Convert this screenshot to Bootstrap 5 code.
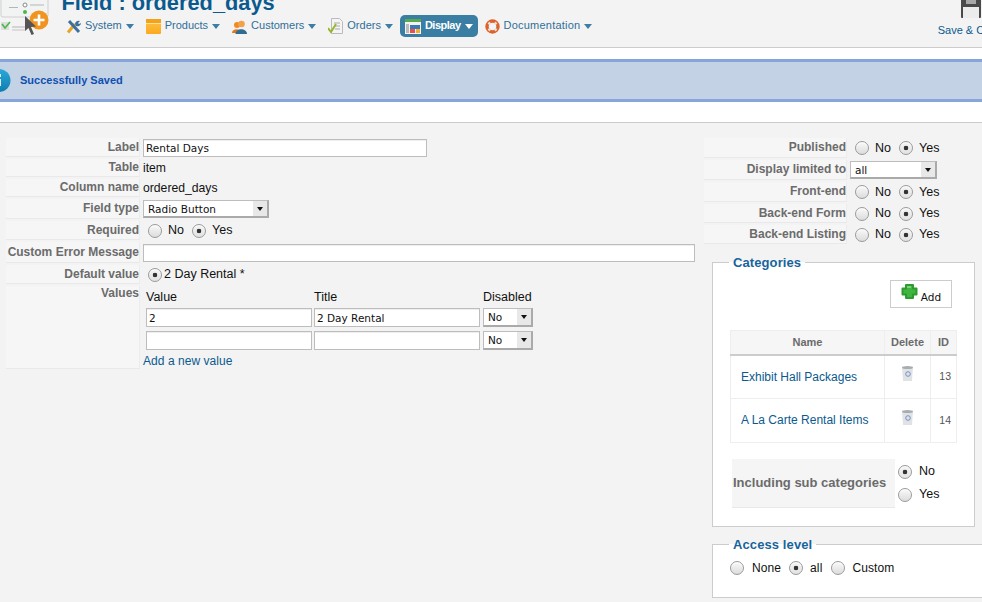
<!DOCTYPE html>
<html lang="en"><head><meta charset="utf-8"><title>Field : ordered_days</title>
<link rel="stylesheet" href="https://cdn.jsdelivr.net/npm/bootstrap@5.3.0/dist/css/bootstrap.min.css">
<style>
html,body{height:602px;overflow:hidden}
body{background:#f3f3f3;font:12px/1.2 "Liberation Sans",Arial,sans-serif;color:#111}
a{text-decoration:none;color:#0b5a8e}
.topbar{height:48px;border-bottom:1px solid #ccc;overflow:hidden}
.logo-slot{width:62px;flex:none}
.page-title{font:bold 21.8px/20px "Liberation Sans",sans-serif;color:#0b5a8e;margin:-7px 0 0 -.5px}
.menu{margin:2px 0 0 0;height:22px}
.menu-item{display:flex;align-items:center;height:22px;padding:0 5px;font-size:11px;color:#2f6f98;border-radius:5px;margin-right:2px;letter-spacing:0}
.menu-item svg{flex:none;margin-right:4px}
.menu-item.sys{margin-left:-1px}
.menu-item.on{background:#3a7ea3;color:#fff;font-weight:bold;letter-spacing:-.5px}
.menu-item.docs{letter-spacing:.22px}
.caret-mini{width:0;height:0;border:4px solid transparent;border-top:5px solid #3d7ea6;border-bottom:0;margin-left:4px}
.on .caret-mini{border-top-color:#fff}
.save-box{margin-right:-22px;width:66px;font-size:11px;color:#0b5a8e;white-space:nowrap}
.save-box svg{display:block;margin-top:-4px;margin-bottom:6px}
.saved-wrap{background:#fff;padding:11px 0 20px;border-bottom:1px solid #ccc}
.saved-msg{height:43px;background:#c3d2e5;border-top:3px solid #86a5d9;border-bottom:3px solid #86a5d9;color:#0f4fb0;font-weight:bold;font-size:11px;overflow:visible}
.saved-msg svg{margin-left:-12px;margin-right:9px;flex:none}
.main-area{padding:15px 0 0 6px}
.left-col{width:689px;flex:none}
.right-col{width:278px;flex:none;margin-left:9px}
.frow{display:flex;align-items:center;margin-bottom:2px}
.h-17{height:17px}.h-18{height:18px}.h-19{height:19px}.h-20{height:20px}.h-21{height:21px}.h-83{height:83px}
.flabel{width:134px;flex:none;align-self:stretch;background:#f6f6f6;border-bottom:1px solid #e9e9e9;border-right:1px solid #ececec;font-weight:bold;color:#6b6b6b;padding:0;display:flex;align-items:center;justify-content:flex-end;white-space:nowrap}
.right-col .flabel{width:143px}
.fval{padding-left:3px;flex:1;display:flex;align-items:center;min-width:0;font-size:12.2px}
.tinput{border:1px solid #bdbdbd;background:#fff;font:10.5px/1 "DejaVu Sans",sans-serif;color:#111;padding:0 2px;height:18px;box-shadow:inset 0 1px 0 #eee;outline:0;display:block}
.w-284{width:284px}
.drop{position:relative;display:block;height:18px;border:1px solid #bdbdbd;border-right:2px solid #aaa;border-bottom:2px solid #aaa;background:#fff;font:10.5px/16px "DejaVu Sans",sans-serif;padding-left:4px;color:#111}
.drop.w-type{width:126px}
.drop.w-limit{width:87px}
.drop::before{content:"";position:absolute;right:0;top:0;bottom:0;width:14px;background:#e8e8e8}
.drop::after{content:"";position:absolute;right:4px;top:6px;border:3px solid transparent;border-top:4px solid #111;border-bottom:0}
.rad{appearance:none;-webkit-appearance:none;width:14px;height:14px;border:1px solid #9a9a9a;border-radius:50%;background:linear-gradient(#f9f9f9,#dcdcdc);margin:0;flex:none;display:inline-block;box-shadow:inset 0 1px 1px #fff}
.rad:checked{background:radial-gradient(circle,#333 0,#333 2px,transparent 2.6px),linear-gradient(#f4f4f4,#e2e2e2)}
.rad-set{display:flex;align-items:center;font-size:12.5px;color:#111}
.rad-set.inset{padding-left:5px}
.rad-set span{margin:0 8px 0 6px}
.rad-set .tight{margin-left:2px}
.vals{display:grid;grid-template-columns:166px 166px 50px;column-gap:2px;row-gap:4px;padding-left:3px;margin-top:4px}
.vals .tinput{width:100%;height:19px;padding:0 2px;font-size:10.5px}
.vals .drop{height:19px;width:50px;margin-left:1px}
.vals-head{color:#111;line-height:15px;margin-bottom:-1px;font-size:12.5px}
.vals-head.disab{margin-left:1px}
.addlink{font-size:12px;display:block;margin:4px 0 0 0;letter-spacing:.05px}
.box{background:#fff;border:1px solid #ccc;margin:0 0 0 8px;padding:0;min-width:0}
.box legend{float:none;width:auto;font:bold 13px/15px "Liberation Sans",sans-serif;color:#17649c;margin:0 0 0 -1px;padding:0 4px;letter-spacing:.1px}
.cat-box{width:263px;height:272px;margin-top:11px;padding:10px 17px 0}
.add-btn{width:62px;height:28px;border:1px solid #ccc;margin:0 5px 22px auto;display:flex;align-items:center;justify-content:center;font:10.5px/1 "DejaVu Sans",sans-serif;color:#111;background:#fff;padding:0}
.add-btn svg{margin-right:3px;margin-top:-5px}
.add-btn b{font-weight:normal;margin-top:7px}
.cat-table{width:226px;table-layout:fixed;border-collapse:collapse;font-size:12px;margin:0}
.col-n{width:154px}.col-d{width:46px}.col-i{width:26px}
.cat-table th,.cat-table td{border:1px solid #eee;padding:0}
.cat-table th{height:24px;background:#f6f6f6;text-align:center;color:#6b6b6b;font-size:11px;border-bottom:2px solid #ccc;font-weight:bold}
.cat-table td{height:44px}
.cat-name{padding-left:10px!important}
.cat-del{text-align:center}
.cat-del svg{margin-top:-8px;display:inline-block}
.cat-id{font-size:10.5px;color:#555;text-align:right;padding-right:5px!important}
.sub-row{display:flex;margin:16px 0 0 2px;height:49px}
.sub-lab{width:163px;background:#f5f5f5;border-bottom:1px solid #e9e9e9;color:#6b6b6b;font-weight:bold;display:flex;align-items:center;padding-left:1px;font-size:13px;white-space:nowrap}
.sub-opts{display:flex;flex-direction:column;gap:8px;padding:5px 0 0 3px}
.sub-opts .rad-set span{margin-left:7px}
.acc-box{width:290px;height:61px;margin-top:10px;padding:9px 17px 0}
.acc-box .rad-set{font-size:12px;letter-spacing:.1px}
.acc-box .rad-set span{margin:0 8px}
.acc-box .rad-set .alls{margin:0 9px 0 7px}
.acc-box .rad-set .cust{margin-left:7px}
</style></head>
<body>
<header class="topbar d-flex">
  <div class="logo-slot">
    <svg width="50" height="40" viewBox="0 0 50 40" role="img" aria-label="Field logo"><rect x="1" y="-8" width="47" height="25" rx="2" fill="#f2f4f3" stroke="#cfcfcf"/><path d="M9 7.500h9M30 5h14M12 27h13" stroke="#b5b5b5" stroke-width="1"/><circle cx="25" cy="5" r="2" fill="#fff" stroke="#888"/><circle cx="25" cy="12" r="2" fill="#4cb849"/><rect x="1" y="22" width="8" height="8" fill="#ddd"/><path d="M2 24l3 4 5-6" fill="none" stroke="#4cb849" stroke-width="1.600"/><path d="M12 30h13" stroke="#c5c5c5"/><circle cx="39" cy="20" r="9.500" fill="#f0941f"/><path d="M39 14.500v11M33.500 20h11" stroke="#fff" stroke-width="2.600"/><path d="M25 16l0 15 3.500-3 3 7 2.500-1-3-7 5-.5z" fill="#555"/></svg>
  </div>
  <div class="flex-grow-1">
    <h1 class="page-title">Field : ordered_days</h1>
    <nav class="menu d-flex">
      <a class="menu-item sys" href="#"><svg width="15" height="15" viewBox="0 0 15 15"><path d="M2 13.500L9 5" stroke="#e9a422" stroke-width="3"/><path d="M3 2l10 11" stroke="#3d6f9e" stroke-width="3"/><path d="M9 5a3.500 3.500 0 0 1 5-3l-2 2 1 1 2-1a3.500 3.500 0 0 1-5 3z" fill="#3d6f9e"/></svg>System<i class="caret-mini"></i></a>
      <a class="menu-item" href="#"><svg width="15" height="15" viewBox="0 0 15 15"><defs><linearGradient id="fold" x1="0" y1="0" x2="0" y2="1"><stop offset="0" stop-color="#fbc64a"/><stop offset="1" stop-color="#fca91e"/></linearGradient></defs><rect width="15" height="15" rx="1" fill="url(#fold)"/><rect width="15" height="4" fill="#f3a21a"/><path d="M0 4.500h15" stroke="#ffe09a"/></svg>Products<i class="caret-mini"></i></a>
      <a class="menu-item" href="#"><svg width="15" height="15" viewBox="0 0 15 15"><circle cx="5" cy="6" r="3" fill="#f08a24"/><path d="M0 14c0-5 9-5 9 0z" fill="#e4761b"/><circle cx="9.500" cy="5" r="3.300" fill="#f4a24a"/><path d="M3.500 15c0-6.500 11.500-6.500 11.500 0z" fill="#2f6b94"/></svg>Customers<i class="caret-mini"></i></a>
      <a class="menu-item" href="#"><svg width="15" height="16" viewBox="0 0 15 16"><path d="M3.500.500h8l3 3v12h-11z" fill="#f4f4f4" stroke="#bbb"/><path d="M6 5h6M6 8h6M7 11h5" stroke="#aaa"/><path d="M0 10l3 4 5-8" fill="none" stroke="#9ab62f" stroke-width="2"/></svg>Orders<i class="caret-mini"></i></a>
      <a class="menu-item on" href="#"><svg width="16" height="15" viewBox="0 0 16 15"><rect width="16" height="15" fill="#f2f2f2"/><rect width="16" height="3" fill="#5aa84c"/><rect x="1" y="5" width="3" height="9" fill="#bbb"/><rect x="5" y="6" width="10" height="4" fill="#3b78b5"/><rect x="5" y="10" width="5" height="4" fill="#e8504a"/><rect x="11" y="10" width="4" height="4" fill="#f0b02c"/></svg>Display<i class="caret-mini"></i></a>
      <a class="menu-item docs" href="#"><svg width="15" height="15" viewBox="0 0 15 15"><circle cx="7.500" cy="7.500" r="5.500" fill="none" stroke="#e0602a" stroke-width="3.400"/><path d="M3.500 3.500l1.800 1.800M11.500 3.500l-1.800 1.800M3.500 11.500l1.800-1.800M11.500 11.500l-1.800-1.800" stroke="#e6e0da" stroke-width="2.600"/></svg>Documentation<i class="caret-mini"></i></a>
    </nav>
  </div>
  <a class="save-box d-flex flex-column align-items-center" href="#"><svg width="20" height="22" viewBox="0 0 20 22"><rect width="20" height="22" rx="1" fill="#4a4a4a"/><rect x="5" y="0" width="10" height="8" fill="#a8a8a8"/><rect x="2" y="11" width="16" height="11" fill="#ececec"/></svg>Save &amp; Close</a>
</header>
<div class="saved-wrap">
  <div class="saved-msg d-flex align-items-center"><svg width="23" height="25" viewBox="0 0 23 25"><defs><linearGradient id="ball" x1="0" y1="0" x2="0" y2="1"><stop offset="0" stop-color="#2aa9d8"/><stop offset="1" stop-color="#0f7db0"/></linearGradient></defs><circle cx="11" cy="12.500" r="11.500" fill="url(#ball)"/><rect x="11" y="6" width="2" height="3" fill="#d8eef7"/><rect x="11" y="11" width="2" height="7" fill="#d8eef7"/></svg>Successfully Saved</div>
</div>
<main class="main-area d-flex align-items-start">
  <section class="left-col">
    <div class="frow h-19"><div class="flabel">Label</div><div class="fval"><input class="tinput w-284" value="Rental Days" aria-label="Label"></div></div>
    <div class="frow h-18"><div class="flabel">Table</div><div class="fval">item</div></div>
    <div class="frow h-18"><div class="flabel">Column name</div><div class="fval">ordered_days</div></div>
    <div class="frow h-20"><div class="flabel">Field type</div><div class="fval"><span class="drop w-type">Radio Button</span></div></div>
    <div class="frow h-19"><div class="flabel">Required</div><div class="fval"><div class="rad-set inset"><input class="rad" type="radio" name="req" aria-label="No"><span>No</span><input class="rad" type="radio" name="req" checked aria-label="Yes"><span>Yes</span></div></div></div>
    <div class="frow h-21"><div class="flabel">Custom Error Message</div><div class="fval"><input class="tinput w-100" aria-label="Custom Error Message"></div></div>
    <div class="frow h-19"><div class="flabel">Default value</div><div class="fval"><div class="rad-set inset"><input class="rad" type="radio" checked aria-label="2 Day Rental"><span class="tight">2 Day Rental *</span></div></div></div>
    <div class="frow align-items-start h-83"><div class="flabel align-items-start">Values</div><div class="fval d-block">
      <div class="vals">
        <div class="vals-head">Value</div><div class="vals-head">Title</div><div class="vals-head disab">Disabled</div>
        <input class="tinput" value="2" aria-label="Value"><input class="tinput" value="2 Day Rental" aria-label="Title"><span class="drop">No</span>
        <input class="tinput" aria-label="Value"><input class="tinput" aria-label="Title"><span class="drop">No</span>
      </div>
      <a class="addlink" href="#">Add a new value</a>
    </div></div>
  </section>
  <aside class="right-col">
    <div class="frow h-20"><div class="flabel">Published</div><div class="fval"><div class="rad-set inset"><input class="rad" type="radio" name="p" aria-label="No"><span>No</span><input class="rad" type="radio" name="p" checked aria-label="Yes"><span>Yes</span></div></div></div>
    <div class="frow h-20"><div class="flabel">Display limited to</div><div class="fval"><span class="drop w-limit">all</span></div></div>
    <div class="frow h-20"><div class="flabel">Front-end</div><div class="fval"><div class="rad-set inset"><input class="rad" type="radio" name="f" aria-label="No"><span>No</span><input class="rad" type="radio" name="f" checked aria-label="Yes"><span>Yes</span></div></div></div>
    <div class="frow h-19"><div class="flabel">Back-end Form</div><div class="fval"><div class="rad-set inset"><input class="rad" type="radio" name="b" aria-label="No"><span>No</span><input class="rad" type="radio" name="b" checked aria-label="Yes"><span>Yes</span></div></div></div>
    <div class="frow h-19"><div class="flabel">Back-end Listing</div><div class="fval"><div class="rad-set inset"><input class="rad" type="radio" name="l" aria-label="No"><span>No</span><input class="rad" type="radio" name="l" checked aria-label="Yes"><span>Yes</span></div></div></div>
    <fieldset class="box cat-box">
      <legend>Categories</legend>
      <a class="add-btn" href="#"><svg width="17" height="17" viewBox="0 0 17 17"><path d="M5 2h7v3.500h3.500v6H12V15H5v-3.500H1.500v-6H5z" fill="#3fb53f" stroke="#2f9a2f" stroke-linejoin="round" stroke-width="2"/><path d="M6 4h4" stroke="#8fe08f" stroke-width="1.500"/></svg><b>Add</b></a>
      <table class="cat-table">
        <colgroup><col class="col-n"><col class="col-d"><col class="col-i"></colgroup>
        <thead><tr><th>Name</th><th>Delete</th><th>ID</th></tr></thead>
        <tbody>
          <tr><td class="cat-name"><a href="#">Exhibit Hall Packages</a></td><td class="cat-del"><svg width="13" height="15" viewBox="0 0 13 15"><path d="M1 1h11l-1 14H2z" fill="#dfe3e6"/><ellipse cx="6.500" cy="1.500" rx="5.500" ry="1.500" fill="#a9adb0"/><circle cx="7" cy="8" r="2.300" fill="none" stroke="#7b8fc4"/></svg></td><td class="cat-id">13</td></tr>
          <tr><td class="cat-name"><a href="#">A La Carte Rental Items</a></td><td class="cat-del"><svg width="13" height="15" viewBox="0 0 13 15"><path d="M1 1h11l-1 14H2z" fill="#dfe3e6"/><ellipse cx="6.500" cy="1.500" rx="5.500" ry="1.500" fill="#a9adb0"/><circle cx="7" cy="8" r="2.300" fill="none" stroke="#7b8fc4"/></svg></td><td class="cat-id">14</td></tr>
        </tbody>
      </table>
      <div class="sub-row"><div class="sub-lab">Including sub categories</div><div class="sub-opts">
        <div class="rad-set"><input class="rad" type="radio" name="s" checked aria-label="No"><span>No</span></div>
        <div class="rad-set"><input class="rad" type="radio" name="s" aria-label="Yes"><span>Yes</span></div>
      </div></div>
    </fieldset>
    <fieldset class="box acc-box">
      <legend>Access level</legend>
      <div class="rad-set"><input class="rad" type="radio" name="a" aria-label="None"><span>None</span><input class="rad" type="radio" name="a" checked aria-label="all"><span class="alls">all</span><input class="rad" type="radio" name="a" aria-label="Custom"><span class="cust">Custom</span></div>
    </fieldset>
  </aside>
</main>
</body></html>
